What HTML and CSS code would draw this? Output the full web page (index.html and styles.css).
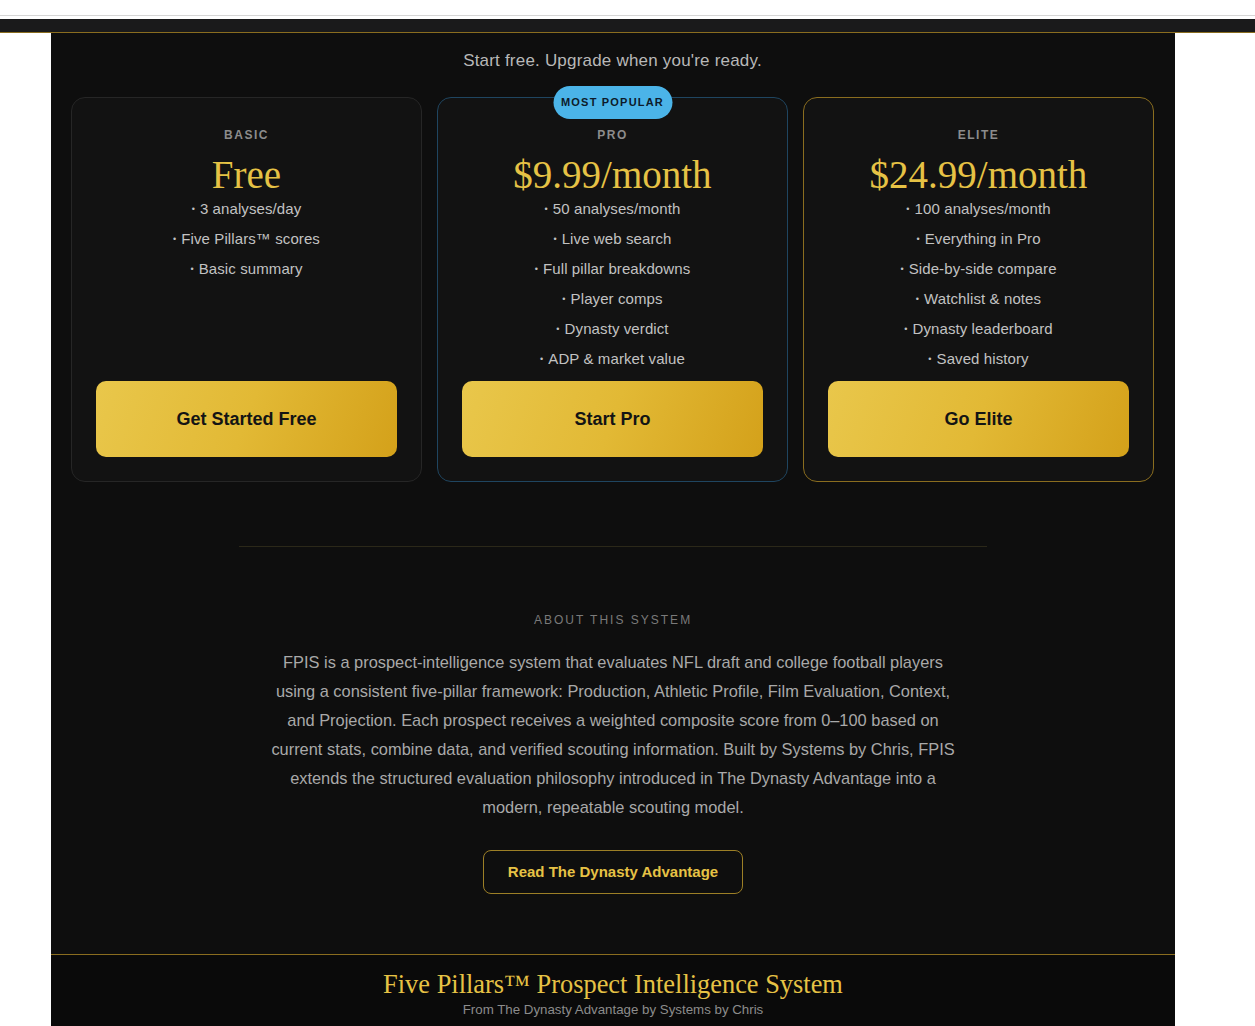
FILE: index.html
```html
<!DOCTYPE html>
<html lang="en">

<head>
  <meta charset="UTF-8" />
  <meta name="viewport" content="width=device-width, initial-scale=1" />
  <title>Five Pillars™ Prospect Intelligence System</title>
  <link rel="stylesheet" href="styles.css">
</head>

<body>
  <div class="top-strip"></div>
  <header class="site-header"></header>

  <div id="main">
    <section class="pricing">
      <p class="tagline">Start free. Upgrade when you're ready.</p>

      <div class="plans">
        <div class="plan">
          <div class="plan-name">BASIC</div>
          <div class="plan-price">Free</div>
          <ul class="plan-features">
            <li>3 analyses/day</li>
            <li>Five Pillars™ scores</li>
            <li>Basic summary</li>
          </ul>
          <button class="plan-button">Get Started Free</button>
        </div>

        <div class="plan plan-pro">
          <span class="badge">MOST POPULAR</span>
          <div class="plan-name">PRO</div>
          <div class="plan-price">$9.99/month</div>
          <ul class="plan-features">
            <li>50 analyses/month</li>
            <li>Live web search</li>
            <li>Full pillar breakdowns</li>
            <li>Player comps</li>
            <li>Dynasty verdict</li>
            <li>ADP &amp; market value</li>
          </ul>
          <button class="plan-button">Start Pro</button>
        </div>

        <div class="plan plan-elite">
          <div class="plan-name">ELITE</div>
          <div class="plan-price">$24.99/month</div>
          <ul class="plan-features">
            <li>100 analyses/month</li>
            <li>Everything in Pro</li>
            <li>Side-by-side compare</li>
            <li>Watchlist &amp; notes</li>
            <li>Dynasty leaderboard</li>
            <li>Saved history</li>
          </ul>
          <button class="plan-button">Go Elite</button>
        </div>
      </div>
    </section>

    <hr class="divider" />

    <section class="about">
      <h4>ABOUT THIS SYSTEM</h4>
      <p>FPIS is a prospect-intelligence system that evaluates NFL draft and college football players using a consistent five-pillar framework: Production, Athletic Profile, Film Evaluation, Context, and Projection. Each prospect receives a weighted composite score from 0–100 based on current stats, combine data, and verified scouting information. Built by Systems by Chris, FPIS extends the structured evaluation philosophy introduced in The Dynasty Advantage into a modern, repeatable scouting model.</p>
      <a class="outline-button" href="#">Read The Dynasty Advantage</a>
    </section>

    <footer class="site-footer">
      <div class="footer-title">Five Pillars™ Prospect Intelligence System</div>
      <div class="footer-sub">From The Dynasty Advantage by Systems by Chris</div>
    </footer>
  </div>
</body>

</html>
```

FILE: styles.css
```css
body {
  font-family: 'Liberation Sans', Arial, Helvetica, sans-serif;
  background-color: white;
  margin: 0;
  padding: 0;
}

.top-strip {
  height: 15px;
  border-bottom: 1px solid #d6d6d6;
  margin-bottom: 3px;
}

.site-header {
  height: 13px;
  background-color: #1a1a1b;
  border-bottom: 1px solid #8a6d1f;
}

#main {
  width: 1124px;
  margin-left: 51px;
  background-color: #0e0e0e;
}

/* pricing */

.pricing {
  padding: 18px 21px 0 20px;
}

.tagline {
  margin: 0 0 26px;
  text-align: center;
  font-size: 17px;
  letter-spacing: 0.2px;
  line-height: 20px;
  color: #b8b8b8;
}

.plans {
  display: grid;
  grid-template-columns: repeat(3, 1fr);
  gap: 15px;
}

.plan {
  position: relative;
  display: flex;
  flex-direction: column;
  text-align: center;
  background-color: #121212;
  border: 1px solid #262626;
  border-radius: 14px;
  padding: 30px 24px 24px;
}

.plan-pro {
  border-color: #1f4560;
}

.plan-elite {
  border-color: #8a6d1f;
}

.badge {
  position: absolute;
  top: -12px;
  left: 50%;
  transform: translateX(-50%);
  height: 33px;
  line-height: 33px;
  padding: 0 8px;
  border-radius: 17px;
  background-color: #4bb4e8;
  color: #0d1b2a;
  font-size: 11px;
  font-weight: bold;
  letter-spacing: 1.2px;
  white-space: nowrap;
}

.plan-name {
  font-size: 12px;
  line-height: 14px;
  font-weight: bold;
  letter-spacing: 1.5px;
  color: #8c8c8c;
}

.plan-price {
  margin-top: 14px;
  font-family: 'Liberation Serif', Georgia, serif;
  font-size: 39px;
  line-height: 38px;
  color: #e6c245;
}

.plan-features {
  list-style: none;
  margin: 0 0 7px;
  padding: 0;
  font-size: 15px;
  letter-spacing: 0.1px;
  line-height: 30px;
  color: #c2c2c2;
}

.plan-features li::before {
  content: "•";
  font-size: 9px;
  vertical-align: 2px;
  margin-right: 5px;
}

.plan-button {
  margin-top: auto;
  height: 76px;
  border: none;
  border-radius: 10px;
  background: linear-gradient(110deg, #e9c74b 0%, #e2b935 50%, #d4a11a 100%);
  color: #141414;
  font-family: inherit;
  font-size: 18px;
  font-weight: bold;
  cursor: pointer;
}

/* about */

.divider {
  width: 748px;
  margin: 64px auto 0;
  border: none;
  border-top: 1px solid #2b2819;
}

.about {
  padding: 66px 0 60px;
  text-align: center;
}

.about h4 {
  margin: 0;
  font-size: 12px;
  line-height: 14px;
  font-weight: normal;
  letter-spacing: 2px;
  color: #7a7a7a;
}

.about p {
  max-width: 690px;
  margin: 21px auto 28px;
  font-size: 16.4px;
  line-height: 29px;
  color: #a9a9a9;
}

.outline-button {
  display: inline-block;
  padding: 0 24px;
  height: 42px;
  line-height: 42px;
  border: 1px solid #9c7f26;
  border-radius: 8px;
  color: #e6c245;
  font-size: 15px;
  font-weight: bold;
  text-decoration: none;
}

/* footer */

.site-footer {
  border-top: 1px solid #8a6d1f;
  background-color: #0a0a0a;
  padding: 15px 0 16px;
  text-align: center;
}

.footer-title {
  font-family: 'Liberation Serif', Georgia, serif;
  font-size: 26.4px;
  line-height: 28px;
  color: #e6c245;
}

.footer-sub {
  margin-top: 4px;
  font-size: 13.3px;
  line-height: 16px;
  color: #8c8c8c;
}
```
